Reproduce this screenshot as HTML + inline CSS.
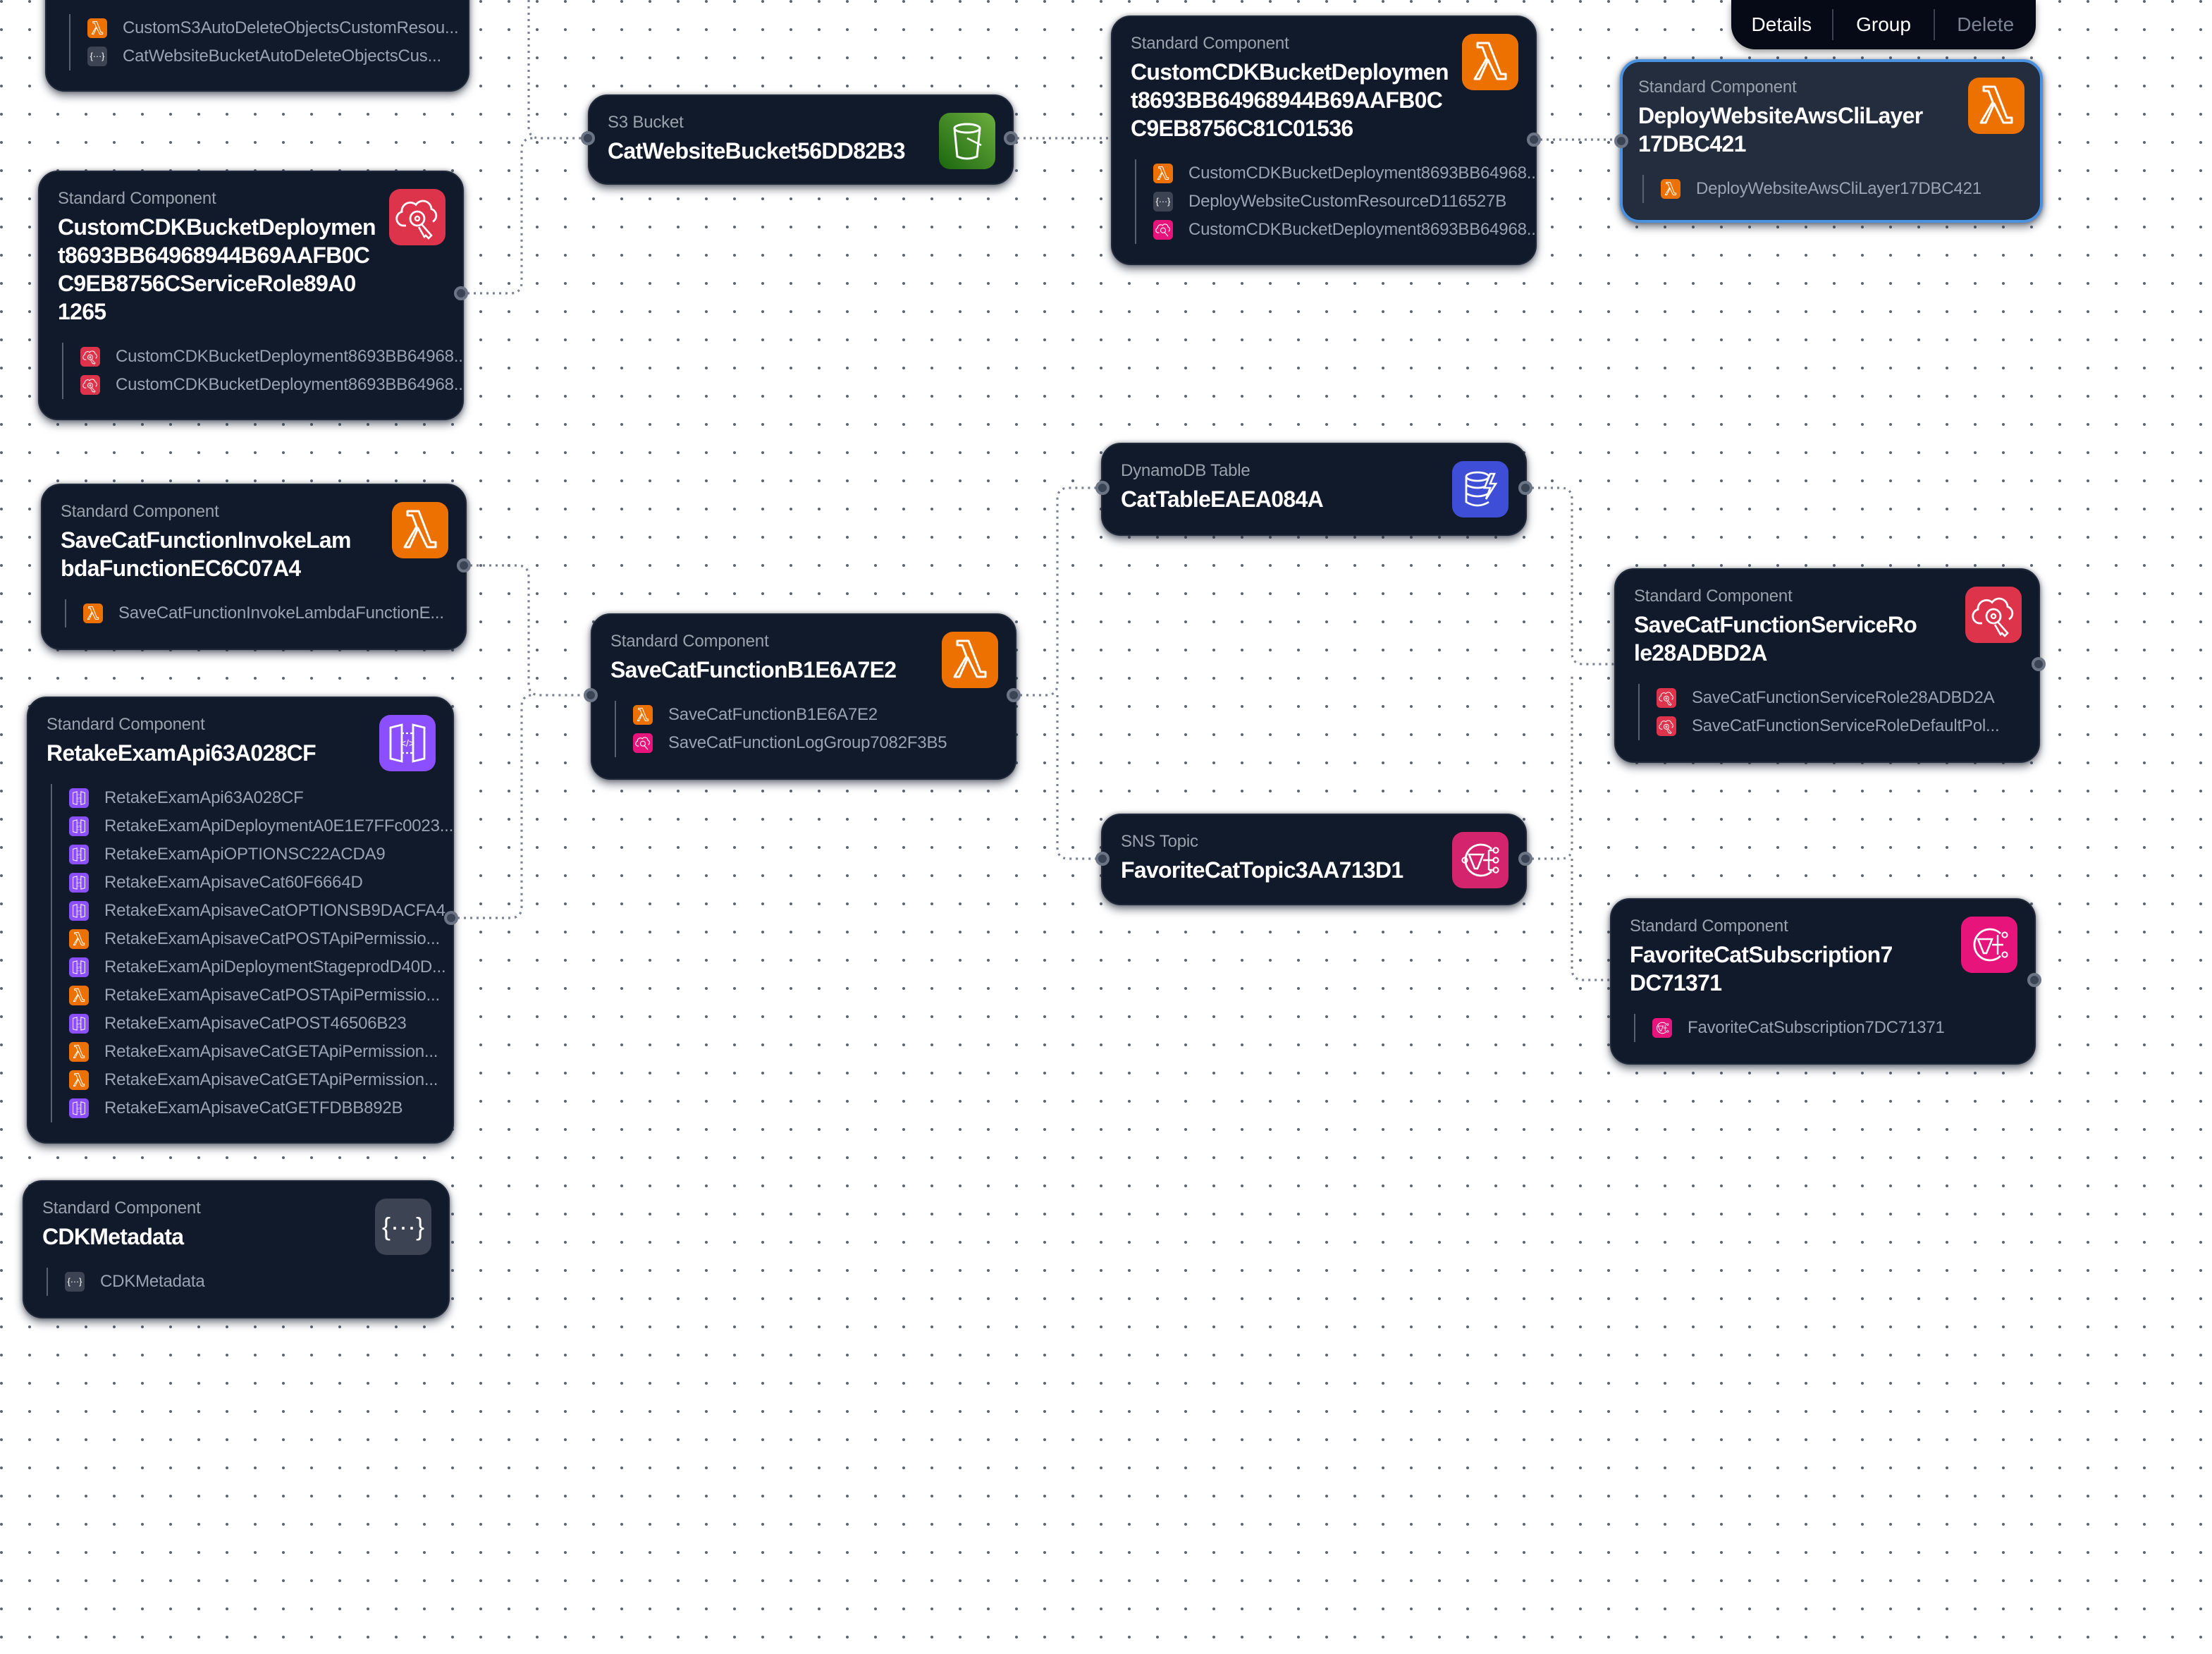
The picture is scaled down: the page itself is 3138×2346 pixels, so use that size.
<!DOCTYPE html>
<html><head><meta charset="utf-8">
<style>
html,body{margin:0;padding:0;}
body{width:3138px;height:2345px;overflow:hidden;background:#fff;
background-image:radial-gradient(circle,#5f6673 0,#5f6673 1.8px,transparent 2.3px);
background-size:40px 40px;background-position:-18px -18px;
font-family:"Liberation Sans",sans-serif;}
#w{position:absolute;left:0;top:0;width:1569px;height:1173px;zoom:2;}
svg.edges{position:absolute;left:0;top:0;}
.card{position:absolute;background:#111a2a;border:1px solid #1f2838;border-radius:14px;
box-shadow:0 3px 6px rgba(20,28,45,.55),0 0 3px rgba(20,28,45,.4);box-sizing:border-box;padding:12px 0 0 13px;overflow:hidden;}
.card.sel{background:#232d3e;border:2px solid #4a92e0;padding:11px 0 0 11px;}
.lab{font-size:12px;line-height:14px;color:#9aa2ae;letter-spacing:-0.1px;}
.ttl{font-size:16px;line-height:20px;font-weight:bold;color:#fff;margin-top:3px;letter-spacing:-0.35px;}
.items{margin-top:12px;border-left:1px solid #566070;margin-left:3px;padding-left:12px;}
.it{height:20px;display:flex;align-items:center;font-size:12px;color:#9aa3b1;white-space:nowrap;letter-spacing:-0.1px;}
.it svg{width:14px;height:14px;margin-right:11px;flex:none;}
.big{position:absolute;top:12px;right:12px;width:40px;height:40px;}
.h{position:absolute;width:10px;height:10px;border-radius:50%;background:#3b4455;border:2px solid #6c7585;box-sizing:border-box;margin:-5px 0 0 -5px;}
.tb{position:absolute;left:1228px;top:0;width:216px;height:35px;background:#050a16;border-radius:0 0 17px 17px;box-shadow:0 2px 5px rgba(0,0,0,.4);display:flex;align-items:center;font-size:14px;color:#fff;}
.tb span{flex:1;text-align:center;}
.tb i{width:1px;height:22px;background:#3b4352;}
</style></head><body>
<svg width="0" height="0" style="position:absolute">
<defs>
<symbol id="lam" viewBox="0 0 40 40"><rect width="40" height="40" rx="8" fill="#ed7100"/><path d="M9 32 L17.5 17.5 L14.5 9.5 H11 V6.5 H19 L27.5 28.5 H31 V32 H25 L18.5 18.5 L12.5 32 Z" fill="none" stroke="#fff" stroke-width="1.5" stroke-linejoin="round"/></symbol>
<symbol id="iam" viewBox="0 0 40 40"><rect width="40" height="40" rx="8" fill="#dd344c"/><path d="M12 26 H10 a5 5 0 0 1 -1 -9.8 a6 6 0 0 1 10 -5 a6 6 0 0 1 11 3 a5 5 0 0 1 1 9" fill="none" stroke="#fff" stroke-width="1.4"/><circle cx="20" cy="21" r="5" fill="none" stroke="#fff" stroke-width="1.4"/><circle cx="20" cy="21" r="1.5" fill="none" stroke="#fff" stroke-width="1.2"/><path d="M23 25 L30 33 L28 35 L26 33 L25 34 L21 27" fill="none" stroke="#fff" stroke-width="1.3"/></symbol>
<symbol id="s3" viewBox="0 0 40 40"><defs><linearGradient id="gs" x1="0" y1="1" x2="1" y2="0"><stop offset="0" stop-color="#1b660f"/><stop offset="1" stop-color="#6cae3e"/></linearGradient></defs><rect width="40" height="40" rx="8" fill="url(#gs)"/><ellipse cx="20" cy="11" rx="9" ry="3" fill="none" stroke="#fff" stroke-width="1.5"/><path d="M11 11 L13 31 Q20 34 27 31 L29 11" fill="none" stroke="#fff" stroke-width="1.5"/><path d="M20 18 L30 23" stroke="#fff" stroke-width="1.3"/></symbol>
<symbol id="api" viewBox="0 0 40 40"><rect width="40" height="40" rx="8" fill="#8c4fff"/><path d="M8 9 L16 7 V33 L8 31 Z M32 9 L24 7 V33 L32 31 Z" fill="none" stroke="#fff" stroke-width="1.4"/><path d="M16 13 H24 M16 27 H24" stroke="#fff" stroke-width="1.1" stroke-dasharray="1.5 1.5"/><text x="20" y="22.5" font-size="7" fill="#fff" text-anchor="middle" font-family="Liberation Sans">&lt;/&gt;</text></symbol>
<symbol id="ddb" viewBox="0 0 40 40"><rect width="40" height="40" rx="8" fill="#3f4ed6"/><ellipse cx="18" cy="11" rx="8" ry="3" fill="none" stroke="#fff" stroke-width="1.4"/><path d="M10 11 V29 Q18 34 26 29 M10 17 Q18 21 26 17 M10 23 Q18 27 26 23" fill="none" stroke="#fff" stroke-width="1.4"/><path d="M27 9 L23 19 H27 L24 27 L31 16 H27 L30 9 Z" fill="#3f4ed6" stroke="#fff" stroke-width="1.3"/></symbol>
<symbol id="sns" viewBox="0 0 40 40"><rect width="40" height="40" rx="8" fill="#d4246e"/><path d="M28 12 A11 11 0 1 0 28 28" fill="none" stroke="#fff" stroke-width="1.4"/><path d="M12 16 H22 L18 26 H16 Z" fill="none" stroke="#fff" stroke-width="1.3"/><path d="M22 20 H30 M26 13 V27 M26 13 H30 M26 27 H30" fill="none" stroke="#fff" stroke-width="1.2"/><circle cx="31" cy="13" r="1.8" fill="none" stroke="#fff"/><circle cx="31" cy="20" r="1.8" fill="none" stroke="#fff"/><circle cx="31" cy="27" r="1.8" fill="none" stroke="#fff"/><circle cx="9" cy="20" r="1.8" fill="none" stroke="#fff"/></symbol>
<symbol id="cr" viewBox="0 0 40 40"><rect width="40" height="40" rx="8" fill="#3c4453"/><text x="20" y="26" font-size="18" fill="#fff" text-anchor="middle" font-family="Liberation Sans">{···}</text></symbol>
<symbol id="snsp" viewBox="0 0 40 40"><rect width="40" height="40" rx="8" fill="#e7157b"/><path d="M28 12 A11 11 0 1 0 28 28" fill="none" stroke="#fff" stroke-width="1.4"/><path d="M12 16 H22 L18 26 H16 Z" fill="none" stroke="#fff" stroke-width="1.3"/><path d="M22 20 H30 M26 13 V27" fill="none" stroke="#fff" stroke-width="1.2"/><circle cx="31" cy="13" r="1.8" fill="none" stroke="#fff"/><circle cx="31" cy="27" r="1.8" fill="none" stroke="#fff"/></symbol>
<symbol id="iamp" viewBox="0 0 40 40"><rect width="40" height="40" rx="8" fill="#e7157b"/><path d="M12 26 H10 a5 5 0 0 1 -1 -9.8 a6 6 0 0 1 10 -5 a6 6 0 0 1 11 3 a5 5 0 0 1 1 9" fill="none" stroke="#fff" stroke-width="1.6"/><circle cx="20" cy="21" r="5" fill="none" stroke="#fff" stroke-width="1.6"/><path d="M23 25 L30 33" stroke="#fff" stroke-width="1.6"/></symbol>
</defs></svg>
<div id="w">
<svg class="edges" width="1569" height="1173" fill="none" stroke="#7b8392" stroke-width="1.6" stroke-dasharray="1.5 3">
<path d="M375 0 V90 Q375 98 383 98 H417"/>
<path d="M327 208 H362 Q370 208 370 200 V106 Q370 98 378 98"/>
<path d="M717 98 H788"/>
<path d="M1088 99 H1150"/>
<path d="M329 401 H367 Q375 401 375 409 V485 Q375 493 383 493 H419"/>
<path d="M320 651 H362 Q370 651 370 643 V501 Q370 493 378 493"/>
<path d="M719 493 H742 Q750 493 750 485 V354 Q750 346 758 346 H782"/>
<path d="M750 493 V601 Q750 609 758 609 H782"/>
<path d="M1082 346 H1107 Q1115 346 1115 354 V463 Q1115 471 1123 471 H1145"/>
<path d="M1082 609 H1107 Q1115 609 1115 601 V479"/>
<path d="M1115 609 V687 Q1115 695 1123 695 H1142"/>
</svg>

<div class="card" style="left:32px;top:-20px;width:301px;height:85px;padding-top:0">
<div class="items" style="margin-top:29px"><div class="it"><svg><use href="#lam"/></svg>CustomS3AutoDeleteObjectsCustomResou...</div><div class="it"><svg><use href="#cr"/></svg>CatWebsiteBucketAutoDeleteObjectsCus...</div></div></div>

<div class="card" style="left:27px;top:121px;width:302px;height:177px">
<div class="lab">Standard Component</div>
<div class="ttl">CustomCDKBucketDeploymen<br>t8693BB64968944B69AAFB0C<br>C9EB8756CServiceRole89A0<br>1265</div>
<svg class="big"><use href="#iam"/></svg>
<div class="items"><div class="it"><svg><use href="#iam"/></svg>CustomCDKBucketDeployment8693BB64968...</div><div class="it"><svg><use href="#iam"/></svg>CustomCDKBucketDeployment8693BB64968...</div></div></div>

<div class="card" style="left:417px;top:67px;width:302px;height:64px">
<div class="lab">S3 Bucket</div><div class="ttl">CatWebsiteBucket56DD82B3</div>
<svg class="big"><use href="#s3"/></svg></div>

<div class="card" style="left:788px;top:11px;width:302px;height:177px">
<div class="lab">Standard Component</div>
<div class="ttl">CustomCDKBucketDeploymen<br>t8693BB64968944B69AAFB0C<br>C9EB8756C81C01536</div>
<svg class="big"><use href="#lam"/></svg>
<div class="items"><div class="it"><svg><use href="#lam"/></svg>CustomCDKBucketDeployment8693BB64968...</div><div class="it"><svg><use href="#cr"/></svg>DeployWebsiteCustomResourceD116527B</div><div class="it"><svg><use href="#iamp"/></svg>CustomCDKBucketDeployment8693BB64968...</div></div></div>

<div class="tb"><span>Details</span><i></i><span>Group</span><i></i><span style="color:#7b8392">Delete</span></div>

<div class="card sel" style="left:1149px;top:42px;width:300px;height:116px">
<div class="lab">Standard Component</div>
<div class="ttl">DeployWebsiteAwsCliLayer<br>17DBC421</div>
<svg class="big" style="top:11px;right:11px"><use href="#lam"/></svg>
<div class="items"><div class="it"><svg><use href="#lam"/></svg>DeployWebsiteAwsCliLayer17DBC421</div></div></div>

<div class="card" style="left:29px;top:343px;width:302px;height:118px">
<div class="lab">Standard Component</div>
<div class="ttl">SaveCatFunctionInvokeLam<br>bdaFunctionEC6C07A4</div>
<svg class="big"><use href="#lam"/></svg>
<div class="items"><div class="it"><svg><use href="#lam"/></svg>SaveCatFunctionInvokeLambdaFunctionE...</div></div></div>

<div class="card" style="left:19px;top:494px;width:303px;height:317px">
<div class="lab">Standard Component</div>
<div class="ttl">RetakeExamApi63A028CF</div>
<svg class="big"><use href="#api"/></svg>
<div class="items">
<div class="it"><svg><use href="#api"/></svg>RetakeExamApi63A028CF</div>
<div class="it"><svg><use href="#api"/></svg>RetakeExamApiDeploymentA0E1E7FFc0023...</div>
<div class="it"><svg><use href="#api"/></svg>RetakeExamApiOPTIONSC22ACDA9</div>
<div class="it"><svg><use href="#api"/></svg>RetakeExamApisaveCat60F6664D</div>
<div class="it"><svg><use href="#api"/></svg>RetakeExamApisaveCatOPTIONSB9DACFA4</div>
<div class="it"><svg><use href="#lam"/></svg>RetakeExamApisaveCatPOSTApiPermissio...</div>
<div class="it"><svg><use href="#api"/></svg>RetakeExamApiDeploymentStageprodD40D...</div>
<div class="it"><svg><use href="#lam"/></svg>RetakeExamApisaveCatPOSTApiPermissio...</div>
<div class="it"><svg><use href="#api"/></svg>RetakeExamApisaveCatPOST46506B23</div>
<div class="it"><svg><use href="#lam"/></svg>RetakeExamApisaveCatGETApiPermission...</div>
<div class="it"><svg><use href="#lam"/></svg>RetakeExamApisaveCatGETApiPermission...</div>
<div class="it"><svg><use href="#api"/></svg>RetakeExamApisaveCatGETFDBB892B</div>
</div></div>

<div class="card" style="left:16px;top:837px;width:303px;height:98px">
<div class="lab">Standard Component</div>
<div class="ttl">CDKMetadata</div>
<svg class="big"><use href="#cr"/></svg>
<div class="items"><div class="it"><svg><use href="#cr"/></svg>CDKMetadata</div></div></div>

<div class="card" style="left:419px;top:435px;width:302px;height:118px">
<div class="lab">Standard Component</div>
<div class="ttl">SaveCatFunctionB1E6A7E2</div>
<svg class="big"><use href="#lam"/></svg>
<div class="items"><div class="it"><svg><use href="#lam"/></svg>SaveCatFunctionB1E6A7E2</div><div class="it"><svg><use href="#iamp"/></svg>SaveCatFunctionLogGroup7082F3B5</div></div></div>

<div class="card" style="left:781px;top:314px;width:302px;height:66px">
<div class="lab">DynamoDB Table</div><div class="ttl">CatTableEAEA084A</div>
<svg class="big"><use href="#ddb"/></svg></div>

<div class="card" style="left:781px;top:577px;width:302px;height:65px">
<div class="lab">SNS Topic</div><div class="ttl">FavoriteCatTopic3AA713D1</div>
<svg class="big"><use href="#sns"/></svg></div>

<div class="card" style="left:1145px;top:403px;width:302px;height:138px">
<div class="lab">Standard Component</div>
<div class="ttl">SaveCatFunctionServiceRo<br>le28ADBD2A</div>
<svg class="big"><use href="#iam"/></svg>
<div class="items"><div class="it"><svg><use href="#iam"/></svg>SaveCatFunctionServiceRole28ADBD2A</div><div class="it"><svg><use href="#iam"/></svg>SaveCatFunctionServiceRoleDefaultPol...</div></div></div>

<div class="card" style="left:1142px;top:637px;width:302px;height:118px">
<div class="lab">Standard Component</div>
<div class="ttl">FavoriteCatSubscription7<br>DC71371</div>
<svg class="big"><use href="#snsp"/></svg>
<div class="items"><div class="it"><svg><use href="#snsp"/></svg>FavoriteCatSubscription7DC71371</div></div></div>

<div class="h" style="left:327px;top:208px"></div>
<div class="h" style="left:417px;top:98px"></div>
<div class="h" style="left:717px;top:98px"></div>
<div class="h" style="left:1088px;top:99px"></div>
<div class="h" style="left:1150px;top:100px"></div>
<div class="h" style="left:329px;top:401px"></div>
<div class="h" style="left:320px;top:651px"></div>
<div class="h" style="left:419px;top:493px"></div>
<div class="h" style="left:719px;top:493px"></div>
<div class="h" style="left:782px;top:346px"></div>
<div class="h" style="left:1082px;top:346px"></div>
<div class="h" style="left:782px;top:609px"></div>
<div class="h" style="left:1082px;top:609px"></div>
<div class="h" style="left:1446px;top:471px"></div>
<div class="h" style="left:1443px;top:695px"></div>
</div>
</body></html>
